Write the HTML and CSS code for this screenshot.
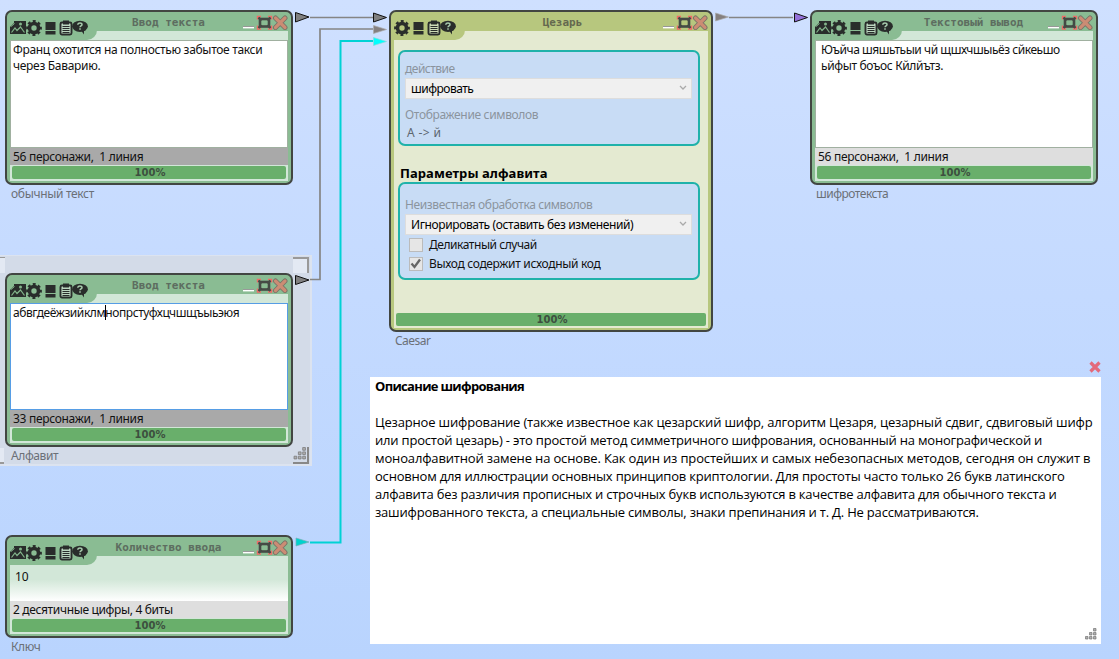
FILE: index.html
```html
<!DOCTYPE html>
<html lang="ru">
<head>
<meta charset="utf-8">
<title>Цезарь</title>
<link rel="stylesheet" href="styles.css">
</head>
<body>
<svg class="defs" width="0" height="0">
  <symbol id="picture" viewBox="0 0 16 15"><path fill="#292d2b" d="M4 1h12v13H0V7l4-4z"/><path d="M1.500 12.500l3.500-4.500 2 2.500 3.500-3.500 4 5.500" fill="none" stroke="#83b58b" stroke-width="1.200"/><circle cx="10.500" cy="4" r="1.500" fill="#83b58b"/><path d="M1 6.500l3.500-3" stroke="#83b58b"/></symbol>
  <symbol id="gear" viewBox="0 0 16 16"><circle cx="8" cy="8" r="4.500" fill="none" stroke="#292d2b" stroke-width="3.600"/><circle cx="8" cy="8" r="6.700" fill="none" stroke="#292d2b" stroke-width="2.400" stroke-dasharray="2.900 2.362" stroke-dashoffset="1.450"/></symbol>
  <symbol id="panel" viewBox="0 0 11 14"><path fill="#292d2b" d="M.5 1h10v8H.5zM.5 10h10v3.500H.5z"/></symbol>
  <symbol id="clip" viewBox="0 0 14 16"><rect x="1.500" y="2.500" width="11" height="12" rx="1.500" fill="#dce8dc" fill-opacity=".6" stroke="#292d2b" stroke-width="1.900"/><path fill="#292d2b" d="M4 .5h6v4H4z"/><path d="M3.500 6.500h7M3.500 8.500h7M3.500 10.500h7M3.500 12.500h7" stroke="#292d2b"/></symbol>
  <symbol id="help" viewBox="0 0 16 15"><path fill="#292d2b" d="M8 9l6-1v2l-2 1v3.500z"/><ellipse cx="8" cy="6.300" rx="7.900" ry="5.600" fill="#292d2b"/><path d="M5.800 4.800c0-2.600 4.400-2.400 4.200-.2-.1 1.400-2 1.200-2 2.700M8 8.300v1.500" fill="none" stroke="#a8cbad" stroke-width="1.500"/></symbol>
  <symbol id="window" viewBox="0 0 46 15"><path d="M1 11.500h11" stroke="#555"/><path d="M1 12.500h11" stroke="#fff" stroke-width="1.800"/><path d="M15.500 4.500V1.500h3.500M26 1.500h3.500v3M15.500 10.500v3.500h3.500M26 14h3.500v-3.500" fill="none" stroke="#f06c68" stroke-width="1.400"/><path d="M16.500 2.500l3 3M28.500 2.500l-3 3M16.500 13l3-3M28.500 13l-3-3" stroke="#454a45" stroke-width="2.400"/><rect x="18" y="4" width="9" height="7.500" fill="none" stroke="#454a45" stroke-width="2.600"/><path d="M33.500 3l9.500 9.500M43 3l-9.500 9.500" stroke="#777367" stroke-width="5" stroke-linecap="round"/><path d="M33.500 3l9.500 9.500M43 3l-9.500 9.500" stroke="#cb8c74" stroke-width="3.200" stroke-linecap="round"/></symbol>
  <symbol id="grip" viewBox="0 0 12 12"><g fill="#b0b0b0" stroke="#777" stroke-width=".7"><path d="M8.500.5h2.500v2.500H8.500zM8.500 4.500h2.500V7H8.500zM8.500 8.500h2.500V11H8.500zM4.500 4.500H7V7H4.500zM4.500 8.500H7V11H4.500zM.5 8.500H3V11H.5z"/></g></symbol>
</svg>

<main class="canvas">
  <div class="selection">
    <i class="corner corner-left"></i><i class="corner corner-right"></i><i class="corner corner-low"></i>
    <div class="resize"><svg width="14" height="13"><use href="#grip"/></svg></div>
  </div>

  <svg class="wires" width="1119" height="659" fill="none">
    <path d="M310 17.500h63M310 279.500h10V29h53M729 17.500h64" stroke="#858585" stroke-width="1.700"/>
    <path d="M310 542.500h30.500V41H373" stroke="#00d2d5" stroke-width="2"/>
    <g fill="#808080" stroke="#111" stroke-width="1"><path d="M295.500 12.500v9.500l13.500-5z"/><path d="M373.500 13v9l13-4.500z"/><path d="M295.500 275.500v9l13.500-4.500z"/></g>
    <g fill="#858080" stroke="#aaa" stroke-width=".7"><path d="M373.500 25.500v8l13-4z"/><path d="M715.500 13v8l13-4z"/></g>
    <path d="M373.500 37.500v8l13-4z" fill="#00ffff" stroke="#8adada" stroke-width=".7"/>
    <path d="M296 538v8l13-4z" fill="#00d2cd" stroke="#7aafb5" stroke-width=".7"/>
    <path d="M794.500 13v9l13-4.500z" fill="#9370db" stroke="#111"/>
  </svg>

  <section class="node input-node">
    <header class="bar">
      <div class="tools"><svg width="16" height="15"><use href="#picture"/></svg><svg width="16" height="16"><use href="#gear"/></svg><svg class="panel-icon" width="11" height="14"><use href="#panel"/></svg><svg class="clip-icon" width="14" height="16"><use href="#clip"/></svg><svg width="16" height="15"><use href="#help"/></svg></div>
      <h2><span class="title">Ввод текста</span></h2><svg class="window" width="46" height="15"><use href="#window"/></svg>
    </header>
    <div class="text"><span class="l1">Франц охотится на полностью забытое такси</span><br><span class="l2">через Баварию.</span></div>
    <div class="status dark"><span class="st1">56 персонажи,&nbsp; 1 линия</span></div>
    <div class="progress"><span>100%</span></div>
    <p class="caption"><span class="c1">обычный текст</span></p>
  </section>

  <section class="node alphabet-node">
    <header class="bar">
      <div class="tools"><svg width="16" height="15"><use href="#picture"/></svg><svg width="16" height="16"><use href="#gear"/></svg><svg class="panel-icon" width="11" height="14"><use href="#panel"/></svg><svg class="clip-icon" width="14" height="16"><use href="#clip"/></svg><svg width="16" height="15"><use href="#help"/></svg></div>
      <h2><span class="title">Ввод текста</span></h2><svg class="window" width="46" height="15"><use href="#window"/></svg>
    </header>
    <div class="text focused"><span class="l3">абвгдеёжзийклм<i class="caret"></i>нопрстуфхцчшщъыьэюя</span></div>
    <div class="status dark"><span class="st1">33 персонажи,&nbsp; 1 линия</span></div>
    <div class="progress"><span>100%</span></div>
    <p class="caption"><span class="c2">Алфавит</span></p>
  </section>

  <section class="node key-node">
    <header class="bar">
      <div class="tools"><svg width="16" height="15"><use href="#picture"/></svg><svg width="16" height="16"><use href="#gear"/></svg><svg class="panel-icon" width="11" height="14"><use href="#panel"/></svg><svg class="clip-icon" width="14" height="16"><use href="#clip"/></svg><svg width="16" height="15"><use href="#help"/></svg></div>
      <h2><span class="title">Количество ввода</span></h2><svg class="window" width="46" height="15"><use href="#window"/></svg>
    </header>
    <div class="number"><span>10</span></div>
    <div class="status"><span class="st2">2 десятичные цифры, 4 биты</span></div>
    <div class="progress"><span>100%</span></div>
    <p class="caption"><span class="c3">Ключ</span></p>
  </section>

  <section class="node output-node">
    <header class="bar">
      <div class="tools"><svg width="16" height="15"><use href="#picture"/></svg><svg width="16" height="16"><use href="#gear"/></svg><svg class="panel-icon" width="11" height="14"><use href="#panel"/></svg><svg class="clip-icon" width="14" height="16"><use href="#clip"/></svg><svg width="16" height="15"><use href="#help"/></svg></div>
      <h2><span class="title">Текстовый вывод</span></h2><svg class="window" width="46" height="15"><use href="#window"/></svg>
    </header>
    <div class="text out"><span class="l4">Юъйча шяшьтьыи чй щшхчшыьёз сйкеьшо</span><br><span class="l5">ьйфыт боъос Кйлйътз.</span></div>
    <div class="status"><span class="st1">56 персонажи,&nbsp; 1 линия</span></div>
    <div class="progress"><span>100%</span></div>
    <p class="caption"><span class="c4">шифротекста</span></p>
  </section>

  <section class="node caesar">
    <header class="bar">
      <div class="tools"><svg width="16" height="16"><use href="#gear"/></svg><svg class="panel-icon" width="11" height="14"><use href="#panel"/></svg><svg class="clip-icon" width="14" height="16"><use href="#clip"/></svg><svg width="16" height="15"><use href="#help"/></svg></div>
      <h2><span class="title">Цезарь</span></h2><svg class="window" width="46" height="15"><use href="#window"/></svg>
    </header>
    <div class="settings">
      <div class="group first">
        <div class="label"><span class="s1">действие</span></div>
        <div class="select"><span class="s2">шифровать</span><svg width="8" height="6"><path d="M1 1l3 3 3-3" fill="none" stroke="#aaa" stroke-width="1.300"/></svg></div>
        <div class="label second"><span class="s3">Отображение символов</span></div>
        <div class="value"><span class="s4">А -&gt; й</span></div>
      </div>
      <h3><span class="s5">Параметры алфавита</span></h3>
      <div class="group last">
        <div class="label"><span class="s6">Неизвестная обработка символов</span></div>
        <div class="select"><span class="s7">Игнорировать (оставить без изменений)</span><svg width="8" height="6"><path d="M1 1l3 3 3-3" fill="none" stroke="#aaa" stroke-width="1.300"/></svg></div>
        <div class="check"><i class="box"></i><span class="s8">Деликатный случай</span></div>
        <div class="check"><i class="box"><svg width="12" height="12"><path d="M1.500 5.500l3 3.500L10 1.500" fill="none" stroke="#666" stroke-width="2.300"/></svg></i><span class="s9">Выход содержит исходный код</span></div>
      </div>
    </div>
    <div class="progress"><span>100%</span></div>
    <p class="caption"><span class="c5">Caesar</span></p>
  </section>

  <article class="note">
    <svg class="note-close" width="12" height="12"><path d="M1.500 1.500l9 9M10.500 1.500l-9 9" stroke="#e3697b" stroke-width="3.200"/></svg>
    <h1><span class="d0">Описание шифрования</span></h1>
    <p><span class="d1">Цезарное шифрование (также известное как цезарский шифр, алгоритм Цезаря, цезарный сдвиг, сдвиговый шифр</span></p>
    <p><span class="d2">или простой цезарь) - это простой метод симметричного шифрования, основанный на монографической и</span></p>
    <p><span class="d3">моноалфавитной замене на основе. Как один из простейших и самых небезопасных методов, сегодня он служит в</span></p>
    <p><span class="d4">основном для иллюстрации основных принципов криптологии. Для простоты часто только 26 букв латинского</span></p>
    <p><span class="d5">алфавита без различия прописных и строчных букв используются в качестве алфавита для обычного текста и</span></p>
    <p><span class="d6">зашифрованного текста, а специальные символы, знаки препинания и т. Д. Не рассматриваются.</span></p>
    <svg class="note-grip" width="12" height="12"><use href="#grip"/></svg>
  </article>
</main>
</body>
</html>
```
FILE: styles.css
```css
* { box-sizing: border-box; }
body, h1, h2, h3, p { margin: 0; }
body { font: 12px/16px "Noto Sans", "Open Sans", sans-serif; color: #111; overflow: hidden; }
.defs { position: absolute; }
svg { display: block; flex: none; }
.canvas { position: relative; width: 1119px; height: 659px; overflow: hidden; white-space: nowrap; background: linear-gradient(#cfe0ff, #c4daff 45%, #b9d4fe); }
.wires { position: absolute; left: 0; top: 0; }

/* Nodes on the workspace */
.node { --green: #8abc93; --light: #d2e7d8; position: absolute; width: 288px; display: flex; flex-direction: column; padding: 3px 3px 2px; border: 2px solid #424642; border-radius: 7px; background: var(--green); }
.input-node { left: 5px; top: 10px; height: 175px; }
.alphabet-node { left: 5px; top: 273px; height: 174px; }
.key-node { left: 5px; top: 535px; height: 103px; }
.output-node { left: 810px; top: 10px; height: 175px; }
.caesar { --green: #b7c77e; --light: #e4ead1; left: 389px; top: 10px; width: 324px; height: 322px; }

.bar { height: 25px; flex: none; display: flex; background: linear-gradient(var(--green) 16px, var(--light) 16px); }
.tools { display: flex; align-items: center; width: 87px; border-radius: 0 0 10px 0; background: var(--green); }
.panel-icon { margin-left: 3px; }
.clip-icon { margin-left: 4px; }
.tools svg:last-child { margin-left: -1px; }
.tools .clip-icon { margin-left: 3px; }
.caesar .tools { width: 71px; }
.bar h2 { flex: 1; text-align: center; font: bold 11px/16px "DejaVu Sans Mono", monospace; color: #5d6d60; padding-right: 2px; }
.caesar h2 { color: #65694f; }

.text { flex: 1; background: #fff; border: 1px solid #a0b0a0; padding: 1px 2px; }
.text.out { padding-left: 5px; }
.text.focused { border-color: #569de5; }
.caret { display: inline-block; width: 1px; height: 15px; margin-right: -1px; vertical-align: -3px; background: #000; }
.number { flex: 1; padding: 4px 5px; background: linear-gradient(var(--light) 40%, #fff); }
.status { flex: none; height: 17px; padding-left: 3px; line-height: 18px; background: #dedede; }
.status.dark { background: #a9a9a9; }
.progress { flex: none; height: 16px; padding: 1px 2px 2px; background: var(--light); display: flex; font: bold 10px/13px "DejaVu Sans", sans-serif; color: #3d4f3f; }
.progress span { flex: 1; text-align: center; padding-left: 2px; background: #69af6b; border-radius: 2px; }
.caption { position: absolute; left: 4px; top: 100%; margin-top: 3px; color: #6b7077; }

/* Cipher settings */
.settings { flex: 1; padding: 10px 12px 0 4px; background: var(--light); }
.group { width: 302px; border: 2px solid #20b2aa; border-radius: 7px; background: #c8dcf5; padding: 8px 6px 0 5px; }
.group.first { height: 96px; }
.group.last { height: 98px; padding-top: 12px; }
.label { height: 18px; color: #8b949e; line-height: 18px; }
.label.second { margin-top: 7px; }
.select { height: 21px; display: flex; align-items: center; justify-content: space-between; padding: 0 4px 1px 5px; border: 1px solid #ddd; background: #f0f0f0; color: #000; }
.select span { padding-top: 2px; }
.value { padding-left: 2px; line-height: 18px; color: #5d666f; }
.settings h3 { font-size: 13px; line-height: 18px; padding: 18px 0 0 2px; height: 36px; color: #000; }
.check { height: 19px; padding-left: 4px; display: flex; align-items: center; gap: 6px; }
.box { width: 14px; height: 14px; border: 1px solid #bbb; background: #e6e6e6; }

/* Active selection */
.selection { position: absolute; left: 0; top: 255px; width: 312px; height: 211px; background: #d3dbe8; border: solid #dce3ef; border-width: 1px 2px 2px 0; }
.corner { position: absolute; background: #e3e9f3; border: solid #999; }
.corner-left { left: 0; top: 1px; width: 5px; height: 16px; border-width: 1px 0 0; }
.corner-right { right: 1px; top: 1px; width: 16px; height: 16px; border-width: 2px 2px 0 0; }
.corner-low { left: 0; bottom: 0; width: 4px; height: 16px; border-width: 0 0 2px; }
.resize { position: absolute; right: 1px; bottom: 0; width: 16px; height: 17px; border: solid #888; border-width: 0 2px 2px 0; }

.note { position: absolute; left: 370px; top: 377px; width: 731px; height: 267px; padding: 0 5px; background: #fff; color: #000; font: 13px/18px "Open Sans", "Noto Sans", sans-serif; }
.note h1 { font-size: 13px; line-height: 18px; margin-bottom: 18px; }
.note-close { position: absolute; right: 0; top: -16px; }
.note-grip { position: absolute; right: 4px; bottom: 4px; }

/* Tracking per run of text */
.l1 { letter-spacing: -.32px; }
.l2 { letter-spacing: -.3px; }
.l3 { letter-spacing: -.42px; }
.l4 { letter-spacing: -.45px; }
.l5 { letter-spacing: -.36px; }
.st1 { letter-spacing: -.3px; }
.st2 { letter-spacing: -.34px; }
.c1 { letter-spacing: -.33px; }
.c2, .c3 { letter-spacing: -.4px; }
.c4, .c5 { letter-spacing: -.5px; }
.s1, .s2 { letter-spacing: -.5px; }
.s3 { letter-spacing: -.34px; }
.s4 { letter-spacing: .4px; }
.s5 { letter-spacing: .07px; }
.s6, .s7 { letter-spacing: -.39px; }
.s8 { letter-spacing: -.45px; }
.s9 { letter-spacing: -.33px; }
.d0 { letter-spacing: -.7px; }
.d1 { letter-spacing: -.17px; }
.d2, .d4, .d6 { letter-spacing: -.2px; }
.d3 { letter-spacing: -.15px; }
.d5 { letter-spacing: -.22px; }
```
